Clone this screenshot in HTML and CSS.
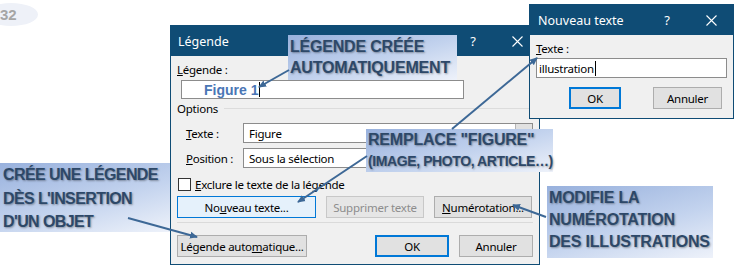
FILE: index.html
```html
<!DOCTYPE html>
<html lang="fr">
<head>
<meta charset="utf-8">
<title>Légende</title>
<link rel="stylesheet" href="styles.css">
</head>
<body>
<div class="stage">
  <div class="pill">32</div>

  <div class="dlg dlg-main">
    <div class="titlebar">
      <span class="title">Légende</span>
      <span class="tb-btns">
        <span class="tb-btn">?</span>
        <span class="tb-btn"><svg width="11" height="11" viewBox="0 0 11 11"><path d="M0.5 0.5L10.5 10.5M10.5 0.5L0.5 10.5" stroke="#fff" stroke-width="1.1" fill="none"/></svg></span>
      </span>
    </div>
    <div class="body">
      <div class="lbl"><u>L</u>égende :</div>
      <div class="input main-input"><span class="fig">Figure 1</span><span class="caret"></span></div>
      <div class="group"><span>Options</span><span class="gline"></span></div>
      <div class="row first-row">
        <span class="rlbl"><u>T</u>exte :</span>
        <div class="select">Figure<span class="ddbtn"></span></div>
      </div>
      <div class="row second-row">
        <span class="rlbl"><u>P</u>osition :</span>
        <div class="select">Sous la sélection<span class="ddbtn"></span></div>
      </div>
      <div class="check-row">
        <span class="cbox"></span>
        <span><u>E</u>xclure le texte de la légende</span>
      </div>
      <div class="btn-row">
        <span class="btn btn-focus w139">No<u>u</u>veau texte...</span>
        <span class="btn btn-dis w98">Supprimer texte</span>
        <span class="btn w98"><u>N</u>umérotation...</span>
      </div>
      <div class="sep"></div>
      <div class="btn-row bottom-row">
        <span class="btn w130">Légende auto<u>m</u>atique...</span>
        <span class="spacer"></span>
        <span class="btn btn-def w74">OK</span>
        <span class="btn w74">Annuler</span>
      </div>
    </div>
  </div>

  <div class="dlg dlg-new">
    <div class="titlebar">
      <span class="title">Nouveau texte</span>
      <span class="tb-btns">
        <span class="tb-btn">?</span>
        <span class="tb-btn"><svg width="11" height="11" viewBox="0 0 11 11"><path d="M0.5 0.5L10.5 10.5M10.5 0.5L0.5 10.5" stroke="#fff" stroke-width="1.1" fill="none"/></svg></span>
      </span>
    </div>
    <div class="body new-body">
      <div class="lbl"><u>T</u>exte :</div>
      <div class="input new-input">illustration<span class="caret"></span></div>
      <div class="new-btns">
        <span class="btn btn-def ok-small">OK</span>
        <span class="btn annul-small">Annuler</span>
      </div>
    </div>
  </div>

  <div class="callout c1">LÉGENDE CRÉÉE<br>AUTOMATIQUEMENT</div>
  <div class="callout c2"><span class="big">REMPLACE "FIGURE"</span><br><span class="small">(IMAGE, PHOTO, ARTICLE…)</span></div>
  <div class="callout c3">CRÉE UNE LÉGENDE<br>DÈS L'INSERTION<br>D'UN OBJET</div>
  <div class="callout c4">MODIFIE LA<br>NUMÉROTATION<br>DES ILLUSTRATIONS</div>

  <svg class="arrows" width="738" height="267" viewBox="0 0 738 267">
    <defs>
      <marker id="ah" markerWidth="8" markerHeight="8" refX="7" refY="4" orient="auto" markerUnits="userSpaceOnUse">
        <path d="M0 0.5L8 4L0 7.5Z" fill="#3d6896"/>
      </marker>
    </defs>
    <g stroke="#3d6896" stroke-width="2" fill="none" marker-end="url(#ah)">
      <line x1="289" y1="70" x2="259" y2="87"/>
      <line x1="452" y1="129" x2="537" y2="58"/>
      <line x1="367" y1="156" x2="298" y2="202"/>
      <line x1="128" y1="218" x2="197" y2="237"/>
      <line x1="546" y1="217" x2="513" y2="205"/>
    </g>
  </svg>
</div>
</body>
</html>
```
FILE: styles.css
```css
* { box-sizing: border-box; }
html, body { margin: 0; padding: 0; background: #fff; }
body { width: 738px; height: 267px; overflow: hidden; font-family: "Noto Sans", "Open Sans", sans-serif; font-size: 11.5px; letter-spacing: -0.25px; color: #000; }
u { text-decoration: underline; text-underline-offset: 1px; }

.stage { position: relative; width: 738px; height: 267px; }

.pill {
  position: absolute; left: -16px; top: 3px; width: 54px; height: 23px;
  border-radius: 50%; background: #eef1f8;
  font-family: "Liberation Sans", Arial, sans-serif; font-weight: bold; font-size: 15px;
  color: #a6a6a6; line-height: 23px; padding-left: 16px; letter-spacing: 0;
}

.dlg { position: absolute; background: #f0f0f0; border: 1px solid #0f4c75; }
.dlg-main { left: 170px; top: 25px; width: 370px; height: 240px; }
.dlg-new { left: 529px; top: 4px; width: 205px; height: 115px; z-index: 2; }

.titlebar { height: 30px; background: #0f4c75; color: #fff; display: flex; align-items: center; }
.title { padding-left: 7px; font-size: 12.5px; letter-spacing: 0; flex: 1; }
.dlg-new .title { padding-left: 8px; }
.tb-btns { display: flex; height: 100%; }
.tb-btn { width: 44px; display: flex; align-items: center; justify-content: center; font-size: 13px; }

.body { padding: 6px 6px 0 6px; }
.lbl { line-height: 16px; height: 16px; }
.input { background: #fff; border: 1px solid #8c8c8c; display: flex; align-items: center; white-space: nowrap; }
.main-input { margin: 2px 0 0 4px; width: 283px; height: 19px; padding-left: 22px; }
.fig { font-family: "Liberation Sans", Arial, sans-serif; font-weight: bold; font-size: 14px; letter-spacing: 0; color: #4a76b5; }
.caret { display: inline-block; width: 1px; height: 15px; background: #000; margin-left: 1px; }

.group { display: flex; align-items: center; height: 16px; margin-top: 1px; gap: 6px; }
.gline { flex: 1; height: 1px; background: #dcdcdc; }

.row { display: flex; align-items: center; height: 20px; padding-left: 9px; white-space: nowrap; }
.first-row { margin-top: 7px; }
.second-row { margin-top: 5px; }
.rlbl { width: 57px; }
.select { flex: 1; height: 20px; background: #fff; border: 1px solid #8c8c8c; display: flex; align-items: center; padding-left: 5px; }
.ddbtn { margin-left: auto; width: 17px; height: 100%; background: #e1e1e1; border-left: 1px solid #b5b5b5; }

.check-row { display: flex; align-items: center; height: 13px; margin-top: 10px; margin-left: 1px; gap: 4px; white-space: nowrap; }
.cbox { width: 13px; height: 13px; border: 1px solid #333; background: #fff; }

.btn-row { display: flex; gap: 10px; margin-top: 5px; }
.btn { height: 22px; background: #e1e1e1; border: 1px solid #adadad; display: flex; align-items: center; justify-content: center; white-space: nowrap; }
.btn-focus { background: #e5f1fb; border-color: #0078d7; }
.btn-dis { background: #e6e6e6; border-color: #c8c8c8; color: #8d8d8d; }
.btn-def { border: 2px solid #0078d7; }
.w139 { width: 139px; }
.w98 { width: 98px; }
.w130 { width: 130px; }
.w74 { width: 74px; }
.spacer { flex: 1; }
.sep { height: 1px; background: #dadada; margin-top: 4px; }
.bottom-row { margin-top: 12px; }

.new-body { padding: 6px 5px 0 6px; }
.new-input { margin-top: 1px; width: 191px; height: 20px; padding-left: 2px; }
.new-btns { display: flex; margin-top: 9px; padding-left: 33px; }
.ok-small { width: 52px; }
.annul-small { width: 69px; margin-left: 32px; }

.callout {
  position: absolute; z-index: 3;
  font-family: "Liberation Sans", Arial, sans-serif; font-weight: bold; font-size: 16px;
  color: #2d4868; text-shadow: 1px 1px 2px rgba(0, 0, 0, 0.35);
  background: linear-gradient(165deg, #98b1dd 0%, #c3d3ee 55%, #eef2fa 100%);
  padding-left: 2px; white-space: nowrap; letter-spacing: -0.2px;
}
.c1 { left: 288px; top: 35px; width: 169px; height: 45px; line-height: 21px; padding-top: 1px; }
.c2 { left: 366px; top: 129px; width: 187px; height: 43px; line-height: 21px; }
.c2 .small { font-size: 14px; letter-spacing: -0.4px; }
.c3 { left: 0; top: 163px; width: 170px; height: 69px; line-height: 23.5px; padding-left: 3px; letter-spacing: -0.6px; }
.c4 { left: 547px; top: 186px; width: 166px; height: 72px; line-height: 22px; padding-top: 1px; }

.arrows { position: absolute; left: 0; top: 0; z-index: 4; pointer-events: none; }
```
